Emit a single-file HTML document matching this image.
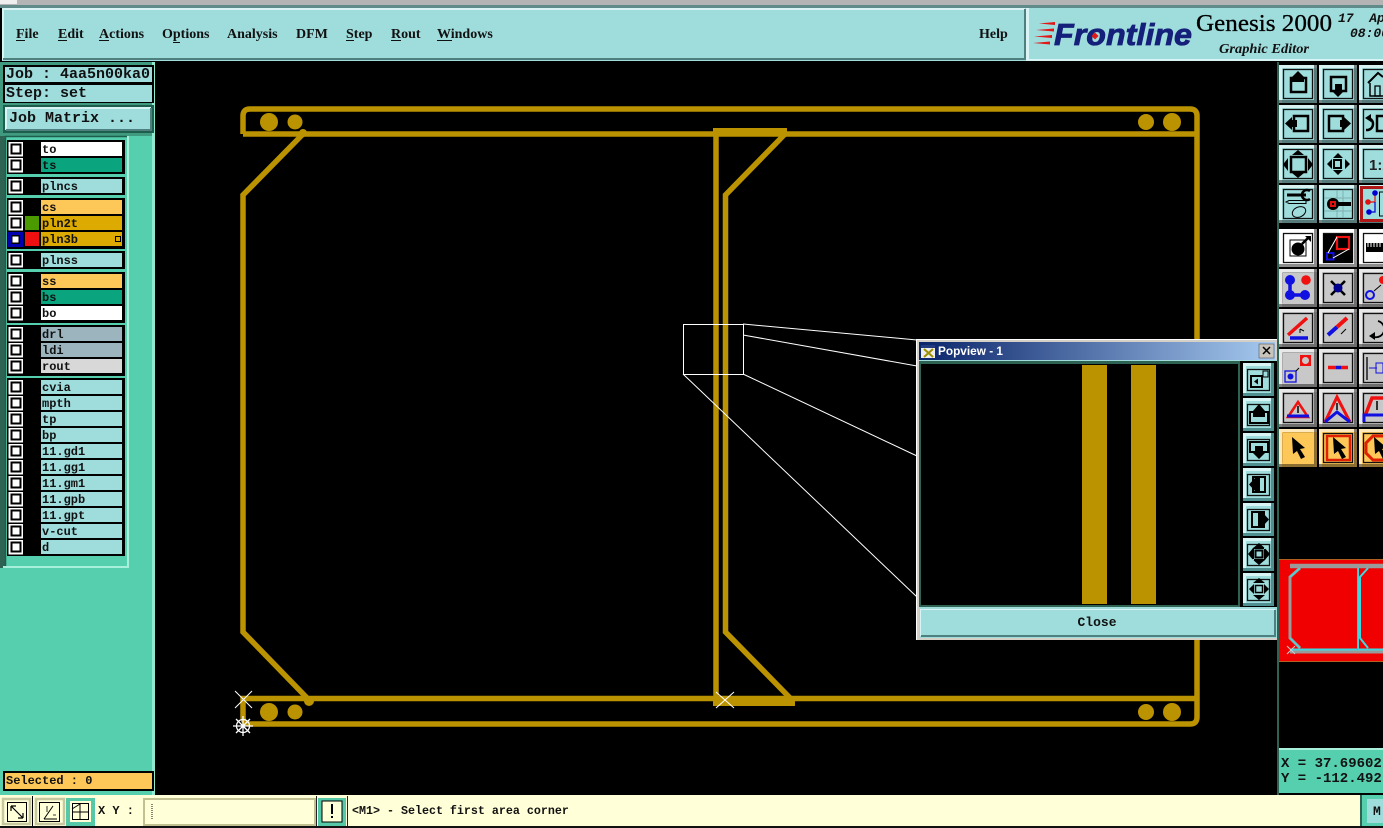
<!DOCTYPE html>
<html><head><meta charset="utf-8"><style>
html,body{margin:0;padding:0;background:#000;overflow:hidden}
svg{display:block}
text{white-space:pre}
.m{font-family:"Liberation Serif",serif;font-weight:bold;font-size:14px;fill:#111}
.l{font-family:"Liberation Mono",monospace;font-weight:bold;font-size:12px;fill:#111}
.j{font-family:"Liberation Mono",monospace;font-weight:bold;font-size:15px;fill:#111}
</style></head><body>
<svg width="1383" height="828" viewBox="0 0 1383 828" xmlns="http://www.w3.org/2000/svg">
<defs>
<linearGradient id="tg" x1="0" x2="1" y1="0" y2="0"><stop offset="0" stop-color="#0a246a"/><stop offset="1" stop-color="#a6caf0"/></linearGradient>
<g id="b"><rect width="38" height="38" fill="currentColor"/><path d="M1.500 38V1.500H38" fill="none" stroke="#fff" stroke-opacity=".6" stroke-width="3"/><path d="M36.500 0V36.500H0" fill="none" stroke="#000" stroke-opacity=".45" stroke-width="3"/><rect x="4.500" y="4.500" width="29" height="29" fill="none" stroke="#111" stroke-width="1.300"/></g>
<g id="s"><rect width="31" height="33" fill="#9fdcdc"/><path d="M1.500 33V1.500H31" fill="none" stroke="#d8f4f4" stroke-width="3"/><path d="M29.500 0V31.500H0" fill="none" stroke="#4f8f8f" stroke-width="3"/><rect x="4.500" y="6.500" width="22" height="21" fill="none" stroke="#111" stroke-width="1.300"/></g>
<g id="cb"><rect x="8.500" y="0" width="14.500" height="14.500" fill="#fff"/><rect x="11.500" y="2.500" width="9" height="9" fill="#fff" stroke="#000" stroke-width="2"/></g>
<g id="cur"><path d="M-6-11L-5 6-1 3 3 11 7 9 2 1 7 0Z" fill="#000"/></g>
</defs>

<!-- window title strip -->
<rect width="1383" height="828" fill="#000"/>
<rect width="1383" height="6" fill="#b4b4b4"/>
<rect x="0" y="0" width="17" height="4" fill="#eee"/>
<rect y="5" width="1383" height="3" fill="#5f8b8b"/>

<!-- menu bar -->
<rect x="2" y="8" width="1024" height="53" fill="#9fdcdc"/>
<path d="M3 60V9H1025" fill="none" stroke="#d8f4f4" stroke-width="2"/>
<path d="M1025 9V59H3" fill="none" stroke="#4f8080" stroke-width="2"/>
<rect x="1026" y="8" width="3" height="53" fill="#d8f4f4"/>
<rect x="1029" y="8" width="354" height="53" fill="#9fdcdc"/>
<rect x="1029" y="59" width="354" height="2" fill="#d8f4f4"/>
<text class="m" x="16" y="38">File</text><rect x="16" y="40" width="9" height="1" fill="#111"/>
<text class="m" x="58" y="38">Edit</text><rect x="58" y="40" width="9" height="1" fill="#111"/>
<text class="m" x="99" y="38">Actions</text><rect x="99" y="40" width="10" height="1" fill="#111"/>
<text class="m" x="162" y="38">Options</text><rect x="173" y="42" width="7" height="1" fill="#111"/>
<text class="m" x="227" y="38">Analysis</text>
<text class="m" x="296" y="38">DFM</text>
<text class="m" x="346" y="38">Step</text><rect x="346" y="40" width="8" height="1" fill="#111"/>
<text class="m" x="391" y="38">Rout</text><rect x="391" y="40" width="10" height="1" fill="#111"/>
<text class="m" x="437" y="38">Windows</text><rect x="437" y="40" width="15" height="1" fill="#111"/>
<text class="m" x="979" y="38">Help</text>

<!-- logo -->
<g fill="#e01818"><path d="M1039 23.500L1055 22V25Z"/><path d="M1036 30L1054 28.500V31.500Z"/><path d="M1034 36.500L1052 35V38Z"/><path d="M1033 43L1050 41.500V44.500Z"/></g>
<text x="1054" y="45" font-family="Liberation Sans,sans-serif" font-weight="bold" font-style="italic" font-size="31" fill="#15207a" stroke="#15207a" stroke-width=".8" textLength="138" lengthAdjust="spacingAndGlyphs">Frontline</text>
<rect x="1092.500" y="33.500" width="5" height="5" fill="#e01818" transform="rotate(45 1095 36)"/>
<text x="1196" y="31" font-family="Liberation Serif,serif" font-size="24" fill="#000" stroke="#000" stroke-width=".3" textLength="136" lengthAdjust="spacingAndGlyphs">Genesis 2000</text>
<text x="1219" y="53" font-family="Liberation Serif,serif" font-weight="bold" font-style="italic" font-size="14" fill="#111" textLength="90" lengthAdjust="spacingAndGlyphs">Graphic Editor</text>
<text x="1338" y="22" font-family="Liberation Mono,monospace" font-weight="bold" font-style="italic" font-size="13" fill="#111">17  Apr</text>
<text x="1350" y="37" font-family="Liberation Mono,monospace" font-weight="bold" font-style="italic" font-size="13" fill="#111">08:00</text>

<!-- left panel -->
<rect x="0" y="62" width="155" height="733" fill="#55cfae"/>
<rect x="0" y="62" width="155" height="74" fill="#3f9a80"/>
<rect x="152" y="62" width="3" height="733" fill="#8fe8d0"/>
<rect x="3" y="65" width="151" height="19" fill="#000"/>
<rect x="5" y="67" width="147" height="15" fill="#9fdcdc"/>
<text class="j" x="6" y="78">Job : 4aa5n00ka0</text>
<rect x="3" y="84" width="151" height="19" fill="#000"/>
<rect x="5" y="85" width="147" height="17" fill="#9fdcdc"/>
<text class="j" x="6" y="97">Step: set</text>
<rect x="3" y="105" width="151" height="28" fill="#1d5e4c"/>
<rect x="6" y="108" width="145" height="22" fill="#9fdcdc"/>
<path d="M6 130V108H151" fill="none" stroke="#d8f4f4" stroke-width="2"/>
<path d="M151 108V130H6" fill="none" stroke="#4f8080" stroke-width="2"/>
<text class="j" x="9" y="122">Job Matrix ...</text>

<rect x="0" y="136" width="5" height="432" fill="#2e6252"/>
<rect x="5" y="136" width="122" height="430" fill="#55cfae"/>
<path d="M5.500 566V136.500H127" fill="none" stroke="#1d5e4c" stroke-width="1.500"/>
<path d="M128 136V567H3" fill="none" stroke="#a8f0dc" stroke-width="2"/>

<!-- layer groups -->
<g fill="#000">
<rect x="7" y="140" width="118" height="34"/>
<rect x="7" y="177" width="118" height="18"/>
<rect x="7" y="198" width="118" height="51"/>
<rect x="7" y="251" width="118" height="18"/>
<rect x="7" y="272" width="118" height="51"/>
<rect x="7" y="325" width="118" height="51"/>
<rect x="7" y="378" width="118" height="178"/>
</g>
<g>
<use href="#cb" y="142"/><use href="#cb" y="158"/><use href="#cb" y="179"/><use href="#cb" y="200"/><use href="#cb" y="216"/>
<use href="#cb" y="232"/><use href="#cb" y="253"/><use href="#cb" y="274"/><use href="#cb" y="290"/><use href="#cb" y="306"/>
<use href="#cb" y="327"/><use href="#cb" y="343"/><use href="#cb" y="359"/>
<use href="#cb" y="380"/><use href="#cb" y="396"/><use href="#cb" y="412"/><use href="#cb" y="428"/><use href="#cb" y="444"/>
<use href="#cb" y="460"/><use href="#cb" y="476"/><use href="#cb" y="492"/><use href="#cb" y="508"/><use href="#cb" y="524"/><use href="#cb" y="540"/>
</g>
<rect x="8" y="232" width="15" height="15" fill="#0000b0"/><rect x="11" y="235" width="9" height="9" fill="#000"/><rect x="12.500" y="236.500" width="6" height="6" fill="#fff"/>
<rect x="25" y="216" width="14" height="14" fill="#4a9a00"/><rect x="25" y="232" width="14" height="14" fill="#f01010"/>
<g>
<rect x="41" y="142" width="81" height="14" fill="#fff"/>
<rect x="41" y="158" width="81" height="14" fill="#0aa57f"/>
<rect x="41" y="179" width="81" height="14" fill="#9fdcdc"/>
<rect x="41" y="200" width="81" height="14" fill="#fdc858"/>
<rect x="41" y="216" width="81" height="14" fill="#dcaa00"/>
<rect x="41" y="232" width="81" height="14" fill="#dcaa00"/>
<rect x="41" y="253" width="81" height="14" fill="#9fdcdc"/>
<rect x="41" y="274" width="81" height="14" fill="#fdc858"/>
<rect x="41" y="290" width="81" height="14" fill="#0aa57f"/>
<rect x="41" y="306" width="81" height="14" fill="#fff"/>
<rect x="41" y="327" width="81" height="14" fill="#9cb4be"/>
<rect x="41" y="343" width="81" height="14" fill="#9cb4be"/>
<rect x="41" y="359" width="81" height="14" fill="#d8d8d8"/>
<rect x="41" y="380" width="81" height="14" fill="#9fdcdc"/>
<rect x="41" y="396" width="81" height="14" fill="#9fdcdc"/>
<rect x="41" y="412" width="81" height="14" fill="#9fdcdc"/>
<rect x="41" y="428" width="81" height="14" fill="#9fdcdc"/>
<rect x="41" y="444" width="81" height="14" fill="#9fdcdc"/>
<rect x="41" y="460" width="81" height="14" fill="#9fdcdc"/>
<rect x="41" y="476" width="81" height="14" fill="#9fdcdc"/>
<rect x="41" y="492" width="81" height="14" fill="#9fdcdc"/>
<rect x="41" y="508" width="81" height="14" fill="#9fdcdc"/>
<rect x="41" y="524" width="81" height="14" fill="#9fdcdc"/>
<rect x="41" y="540" width="81" height="14" fill="#9fdcdc"/>
</g>
<rect x="115.500" y="236.500" width="5" height="5" fill="none" stroke="#000" stroke-width="1"/>
<text class="l" x="42" y="153">to</text><text class="l" x="42" y="169">ts</text><text class="l" x="42" y="190">plncs</text>
<text class="l" x="42" y="211">cs</text><text class="l" x="42" y="227">pln2t</text><text class="l" x="42" y="243">pln3b</text>
<text class="l" x="42" y="264">plnss</text><text class="l" x="42" y="285">ss</text><text class="l" x="42" y="301">bs</text><text class="l" x="42" y="317">bo</text>
<text class="l" x="42" y="338">drl</text><text class="l" x="42" y="354">ldi</text><text class="l" x="42" y="370">rout</text>
<text class="l" x="42" y="391">cvia</text><text class="l" x="42" y="407">mpth</text><text class="l" x="42" y="423">tp</text><text class="l" x="42" y="439">bp</text>
<text class="l" x="42" y="455">11.gd1</text><text class="l" x="42" y="471">11.gg1</text><text class="l" x="42" y="487">11.gm1</text><text class="l" x="42" y="503">11.gpb</text><text class="l" x="42" y="519">11.gpt</text>
<text class="l" x="42" y="535">v-cut</text><text class="l" x="42" y="551">d</text>

<rect x="3" y="771" width="151" height="20" fill="#000"/>
<rect x="5" y="773" width="147" height="16" fill="#fdc858"/>
<text class="l" x="6" y="784">Selected : 0</text>

<!-- PCB canvas -->
<g fill="none" stroke="#bb9300" stroke-width="5.500">
<path d="M243 134V116Q243 109 250 109H1190Q1197 109 1197 116V717Q1197 724 1190 724H250Q243 724 243 717V698.500H1197"/>
<path d="M243 134H1197"/>
<path d="M303 134L243 195V632L309 700"/>
<path d="M716 130V702"/>
<path d="M785 134L725.500 195V632L793 701"/>
</g>
<rect x="713" y="128" width="74" height="8" fill="#bb9300"/>
<rect x="713" y="699" width="82" height="7" fill="#bb9300"/>
<g fill="#bb9300">
<circle cx="269" cy="122" r="9"/><circle cx="295" cy="122" r="7.500"/><circle cx="1146" cy="122" r="8"/><circle cx="1172" cy="122" r="9"/>
<circle cx="269" cy="712" r="9"/><circle cx="295" cy="712" r="7.500"/><circle cx="1146" cy="712" r="8"/><circle cx="1172" cy="712" r="9"/>
<circle cx="309" cy="701" r="5"/><circle cx="303" cy="133" r="4"/>
</g>
<g fill="none" stroke="#fff" stroke-width="1">
<rect x="683.500" y="324.500" width="60" height="50"/>
<path d="M743 324L917 340M743 335L917 366M743 374L917 456M683 374L917 597"/>
<path d="M235 691L252 708M252 691L235 708M716 692L734 708M734 692L716 708"/>
<path d="M233 726H253M243 716V736M236 719L250 733M250 719L236 733" stroke-width="1.300"/><circle cx="243" cy="726" r="6.500" stroke-width="1.300"/>
</g>

<!-- popup -->
<rect x="916" y="339" width="361" height="301" fill="#d4d0c8"/>
<path d="M916.500 640V339.500H1277" fill="none" stroke="#fff"/>
<rect x="919" y="342" width="356" height="18" fill="url(#tg)"/>
<rect x="921" y="345" width="14" height="13" fill="#eee"/><rect x="921" y="345" width="14" height="3" fill="#223a80"/>
<path d="M924 349L933 357M933 349L924 357" stroke="#a09000" stroke-width="2"/>
<text x="938" y="355" font-family="Liberation Sans,sans-serif" font-weight="bold" font-size="12" fill="#fff" textLength="65" lengthAdjust="spacingAndGlyphs">Popview - 1</text>
<rect x="1259" y="344" width="15" height="14" fill="#c8c4bc" stroke="#555" stroke-width=".6"/>
<path d="M1263 347L1270 354M1270 347L1263 354" stroke="#000" stroke-width="1.500"/>
<rect x="919" y="360" width="358" height="278" fill="#9fdcdc"/>
<rect x="919" y="361" width="321" height="246" fill="#2e6252"/>
<rect x="921" y="364" width="317" height="241" fill="#000"/>
<rect x="1082" y="365" width="25" height="239" fill="#bb9300"/>
<rect x="1131" y="365" width="25" height="239" fill="#bb9300"/>
<rect x="1240" y="361" width="37" height="246" fill="#000"/>
<use href="#s" x="1243" y="363"/><use href="#s" x="1243" y="398"/><use href="#s" x="1243" y="433"/><use href="#s" x="1243" y="468"/><use href="#s" x="1243" y="503"/><use href="#s" x="1243" y="538"/><use href="#s" x="1243" y="573"/>
<g fill="none" stroke="#000" stroke-width="2">
<path d="M1251 376H1262V387H1251Z"/><path d="M1263 371H1268V377H1263Z" stroke-width="1"/>
<path d="M1250 412H1268V423H1250Z"/>
<path d="M1250 442H1268V452H1250Z"/>
<path d="M1265 477H1253V492H1265Z"/>
<path d="M1252 512H1264V527H1252Z"/>
<rect x="1255.500" y="550.500" width="7" height="7" stroke-width="2"/>
<rect x="1255.500" y="585.500" width="7" height="7" stroke-width="1.500"/>
</g>
<g fill="#000">
<path d="M1254 381.500L1258 378.500V384.500Z"/>
<path d="M1259 404L1265 411V417H1253V411Z"/>
<path d="M1259 459L1266 452H1263V446H1255V452H1252Z"/>
<path d="M1249 484.500L1255 478H1260V491H1255Z"/>
<path d="M1269 519.500L1263 513H1258V526H1263Z"/>
<path d="M1259 543L1266 549H1252ZM1259 565L1266 559H1252ZM1248 554L1254 547V561ZM1270 554L1264 547V561Z"/>
<path d="M1259 578L1265 583H1253ZM1259 600L1265 595H1253ZM1249 589L1254 584V594ZM1269 589L1264 584V594Z"/>
</g>
<rect x="920" y="609" width="355" height="27" fill="#9fdcdc"/>
<path d="M920.500 636V609.500H1275" fill="none" stroke="#d8f4f4"/>
<path d="M1275 610V636H921" fill="none" stroke="#4f8080" stroke-width="2"/>
<text x="1097" y="626" text-anchor="middle" font-family="Liberation Mono,monospace" font-weight="bold" font-size="13" fill="#111">Close</text>

<!-- right toolbar -->
<rect x="1277" y="62" width="2" height="733" fill="#2e6252"/>
<rect x="1279" y="62" width="104" height="408" fill="#000"/>
<g color="#9fdcdc">
<use href="#b" x="1279" y="65"/><use href="#b" x="1319" y="65"/><use href="#b" x="1359" y="65"/>
<use href="#b" x="1279" y="105"/><use href="#b" x="1319" y="105"/><use href="#b" x="1359" y="105"/>
<use href="#b" x="1279" y="145"/><use href="#b" x="1319" y="145"/><use href="#b" x="1359" y="145"/>
<use href="#b" x="1279" y="185"/><use href="#b" x="1319" y="185"/><use href="#b" x="1359" y="185"/>
</g>
<g color="#fff"><use href="#b" x="1279" y="229"/><use href="#b" x="1319" y="229"/><use href="#b" x="1359" y="229"/></g>
<g color="#c8c8c8">
<use href="#b" x="1279" y="269"/><use href="#b" x="1319" y="269"/><use href="#b" x="1359" y="269"/>
<use href="#b" x="1279" y="309"/><use href="#b" x="1319" y="309"/><use href="#b" x="1359" y="309"/>
<use href="#b" x="1279" y="349"/><use href="#b" x="1319" y="349"/><use href="#b" x="1359" y="349"/>
<use href="#b" x="1279" y="389"/><use href="#b" x="1319" y="389"/><use href="#b" x="1359" y="389"/>
</g>
<g color="#fdc858"><use href="#b" x="1279" y="429"/><use href="#b" x="1319" y="429"/><use href="#b" x="1359" y="429"/></g>
<!-- frameless buttons -->
<rect x="1283" y="273" width="31" height="31" fill="#c8c8c8"/>
<rect x="1283" y="353" width="31" height="31" fill="#c8c8c8"/>
<rect x="1283" y="433" width="31" height="31" fill="#fdc858"/>

<!-- teal icons -->
<g fill="none" stroke="#000" stroke-width="2.500">
<rect x="1291" y="78" width="15" height="14"/><path d="M1331 77H1346V91H1331Z"/>
<path d="M1368 83L1378 73 1383 77" stroke-width="2"/><path d="M1370 83V96H1383" stroke-width="1.500"/><path d="M1375 86H1380V96H1375Z" stroke-width="1.300"/>
<rect x="1294" y="116" width="14" height="15"/><rect x="1329" y="116" width="14" height="15"/>
<path d="M1383 116H1377V131H1383"/><path d="M1368 118A6 6 0 0 1 1373 124A6 6 0 0 1 1368 130H1366" stroke-width="2.500"/>
<rect x="1291" y="157" width="15" height="15"/><rect x="1334" y="160" width="7" height="8" stroke-width="2"/>
</g>
<g fill="#000">
<path d="M1298 71L1304 77V82H1292V77Z"/><path d="M1338 97L1331 90H1345Z"/><rect x="1335" y="84" width="7" height="7"/>
<path d="M1285 123.500L1292 117V130Z"/><rect x="1292" y="120" width="5" height="7"/>
<path d="M1351 123.500L1344 117V130Z"/><rect x="1340" y="120" width="5" height="7"/>
<path d="M1298 150L1304 155H1292ZM1298 178L1304 173H1292ZM1283 164.500L1288 158V171ZM1313 164.500L1308 158V171Z"/>
<path d="M1338 153L1343 158H1333ZM1338 175L1343 170H1333ZM1327 164L1332 159V169ZM1350 164L1345 159V169Z"/>
<path d="M1365 118L1371 114V122Z"/>
</g>
<text x="1369" y="170" font-family="Liberation Sans,sans-serif" font-weight="bold" font-size="15" fill="#222">1:2</text>
<!-- row 4 -->
<path d="M1287 195H1306" stroke="#000" stroke-width="3"/><path d="M1310 191A5 5 0 1 0 1310 199" fill="none" stroke="#000" stroke-width="2.500"/>
<path d="M1289 200.500H1306V203.500H1289L1286 202Z" fill="none" stroke="#000"/>
<ellipse cx="1299" cy="212" rx="7" ry="5" fill="none" stroke="#000" transform="rotate(-25 1299 212)"/>
<path d="M1324 198H1352M1337 190V218M1343 190V218M1324 211H1352" stroke="#7fb0b0"/>
<circle cx="1333" cy="204" r="6" fill="#000"/><rect x="1336" y="202" width="15" height="4" fill="#000"/><rect x="1330" y="201" width="6" height="6" fill="#e01010"/><rect x="1332" y="203" width="2" height="2" fill="#000"/>
<rect x="1360" y="186" width="23" height="36" fill="#b01818"/><rect x="1363" y="189" width="20" height="30" fill="#9fdcdc"/>
<path d="M1368 202H1375V193" fill="none" stroke="#e01010" stroke-width="1.200"/><path d="M1375 202V212H1369" fill="none" stroke="#0000d0" stroke-width="1.200"/>
<circle cx="1368" cy="202" r="2.800" fill="#e01010"/><circle cx="1375" cy="193" r="2.800" fill="#0000d0"/><circle cx="1369" cy="212" r="2.800" fill="#0000d0"/>
<rect x="1379.500" y="192" width="4" height="24" fill="none" stroke="#000"/>

<!-- white row -->
<rect x="1290" y="240" width="16" height="16" fill="none" stroke="#000"/>
<circle cx="1298" cy="249" r="6.500" fill="#000"/><path d="M1302 244L1308 238" stroke="#000" stroke-width="2.500"/><path d="M1305 236H1311V242Z" fill="#000"/>
<rect x="1323" y="234" width="30" height="29" fill="#000"/>
<rect x="1337" y="237" width="12" height="12" fill="none" stroke="#f01010" stroke-width="2.200"/>
<rect x="1327" y="253" width="6.500" height="6.500" fill="none" stroke="#1010e0" stroke-width="2"/>
<path d="M1328 253L1337 237M1333 258L1349 249" stroke="#fff"/>
<rect x="1366" y="243" width="17" height="9" fill="#000"/><path d="M1368 243V247M1371 243V247M1374 243V247M1377 243V247M1380 243V247" stroke="#fff"/>
<!-- gray row 2 -->
<path d="M1290 283V295H1305" fill="none" stroke="#1010e0" stroke-width="3.500"/>
<circle cx="1290" cy="280" r="5" fill="#1010e0"/><circle cx="1306" cy="280" r="4.800" fill="#f01010"/><circle cx="1290" cy="295" r="5" fill="#1010e0"/><circle cx="1305" cy="295" r="5" fill="#1010e0"/>
<path d="M1331 281L1345 295M1345 281L1331 295" stroke="#000" stroke-width="2.500"/><circle cx="1338" cy="288" r="4.500" fill="#000090"/>
<circle cx="1370" cy="295" r="4" fill="none" stroke="#1010e0" stroke-width="2"/><path d="M1374 291L1381 285" stroke="#000"/><circle cx="1383" cy="280" r="4" fill="#f01010"/>
<!-- gray row 3 -->
<path d="M1288 335L1307 318" stroke="#f01010" stroke-width="3.500"/><path d="M1290 338H1308" stroke="#1010e0" stroke-width="3.500"/><path d="M1304 331L1300 329M1300 329V333" stroke="#000"/>
<path d="M1328 335L1337 327" stroke="#1010e0" stroke-width="4"/><path d="M1337 327L1347 318" stroke="#f01010" stroke-width="4"/><path d="M1341 334L1346 329" stroke="#000"/>
<path d="M1378 321A8 8 0 1 1 1374 337" fill="none" stroke="#000" stroke-width="1.800"/><path d="M1369 336L1375 332V340Z" fill="#000"/>
<!-- gray row 4 -->
<rect x="1300" y="355" width="11" height="11" fill="#f01010"/><circle cx="1305.500" cy="360.500" r="3.500" fill="#c8c8c8"/>
<rect x="1285" y="371" width="11" height="11" fill="none" stroke="#1010e0" stroke-width="1.300"/><circle cx="1290.500" cy="376.500" r="3" fill="#1010e0"/><path d="M1296 371L1299 368" stroke="#000"/>
<path d="M1328 367.500H1336" stroke="#f01010" stroke-width="3.500"/><path d="M1336 367.500H1341" stroke="#1010e0" stroke-width="3.500"/><path d="M1341 367.500H1348" stroke="#f01010" stroke-width="3.500"/>
<path d="M1367 357V380" stroke="#000" stroke-width="1.300"/><path d="M1369 368H1377" stroke="#1010e0"/><rect x="1376" y="363" width="7" height="10" fill="none" stroke="#1010e0"/>
<!-- gray row 5 -->
<path d="M1288 417L1298 402 1308 417Z" fill="none" stroke="#f01010" stroke-width="2.500"/><path d="M1287 416H1309" stroke="#1010e0" stroke-width="3"/>
<path d="M1325 422L1337 397 1350 422" fill="none" stroke="#f01010" stroke-width="3"/><path d="M1325 422L1337 412 1350 422" fill="none" stroke="#1010e0" stroke-width="3"/>
<path d="M1365 416L1372 398H1383" fill="none" stroke="#f01010" stroke-width="3.500"/><path d="M1364 422V415H1383" fill="none" stroke="#1010e0" stroke-width="3"/>
<path d="M1298 406V413M1337 403V410M1377 401V410" stroke="#000" stroke-width="1.500"/>
<!-- orange row -->
<use href="#cur" transform="translate(1298 448)"/>
<rect x="1327" y="436" width="23" height="24" fill="none" stroke="#e02000" stroke-width="2.500"/>
<use href="#cur" transform="translate(1339 448)"/>
<path d="M1383 436H1373L1366 443V453L1373 460H1383" fill="none" stroke="#e02000" stroke-width="3"/>
<use href="#cur" transform="translate(1380 448)"/>

<!-- minimap -->
<rect x="1279" y="559" width="104" height="103" fill="#f00000"/>
<rect x="1279" y="559" width="104" height="1" fill="#b06020"/><rect x="1279" y="661" width="104" height="1" fill="#b06020"/>
<g fill="none">
<path d="M1290 566H1383" stroke="#9a9a9a" stroke-width="4.500"/>
<path d="M1290 652H1383" stroke="#9a9a9a" stroke-width="3"/>
<path d="M1290 649.500H1383" stroke="#40d8e0" stroke-width="2"/>
<path d="M1300 568L1290 577V638L1300 648" stroke="#9a9a9a" stroke-width="3"/>
<path d="M1300 568L1290 577" stroke="#40d8e0" stroke-width="1.500"/>
<path d="M1290 638L1300 648" stroke="#40d8e0" stroke-width="1.500"/>
<path d="M1358 568V650" stroke="#9a9a9a" stroke-width="2"/>
<path d="M1358.500 568V650" stroke="#40d8e0" stroke-width="1"/>
<path d="M1368 568L1360 577V638L1368 648" stroke="#40d8e0" stroke-width="2"/>
<path d="M1287 646L1295 654M1295 646L1287 654" stroke="#ccc" stroke-width="1"/>
</g>

<!-- coordinates -->
<rect x="1279" y="748" width="104" height="45" fill="#55cfae"/>
<rect x="1279" y="748" width="104" height="2" fill="#a8f0dc"/>
<text x="1281" y="767" font-family="Liberation Mono,monospace" font-weight="bold" font-size="14" fill="#111">X = 37.69602</text>
<text x="1281" y="782" font-family="Liberation Mono,monospace" font-weight="bold" font-size="14" fill="#111">Y = -112.492</text>

<!-- bottom bar -->
<rect y="795" width="1383" height="31" fill="#ffffd8"/>
<rect y="826" width="1383" height="2" fill="#111"/>
<g fill="#ffffd8" stroke="#c8c8a0" stroke-width="2.500">
<rect x="3" y="799" width="27" height="25"/><rect x="36" y="799" width="28" height="25"/>
</g>
<path d="M32.500 796V826" stroke="#000"/>
<rect x="66" y="798" width="29" height="28" fill="#55c8a8"/>
<rect x="70" y="801" width="21" height="21" fill="#ffffd8"/>
<g fill="none" stroke="#000">
<rect x="7.500" y="802.500" width="19" height="19"/><path d="M11 806L23 818M11 806H16M11 806V811M23 818H18M23 818V813" stroke-width="1.200"/>
<rect x="39.500" y="802.500" width="20" height="19"/><path d="M44 819H57M44 819L53 806"/><path d="M47 806V812M53 815H56" stroke-width=".8"/>
<rect x="72.500" y="803.500" width="16" height="16"/><path d="M72 812H88M80 804V820M72 809L80 804"/>
</g>
<text class="l" x="98" y="814">X Y :</text>
<rect x="144" y="799" width="171" height="26" fill="#ffffd8" stroke="#c0c090" stroke-width="2"/>
<path d="M152 804V820" stroke="#111" stroke-dasharray="1 1"/>
<rect x="316" y="796" width="1" height="30" fill="#222"/>
<rect x="318" y="798" width="28" height="28" fill="#55c8a8"/>
<rect x="322" y="801" width="20" height="21" fill="#ffffd8" stroke="#000"/>
<rect x="331" y="804" width="2" height="10" fill="#000"/><rect x="331" y="816" width="2" height="2" fill="#000"/>
<rect x="347" y="796" width="1" height="30" fill="#222"/>
<text x="352" y="814" font-family="Liberation Mono,monospace" font-weight="bold" font-size="11.670" fill="#111">&lt;M1&gt; - Select first area corner</text>
<rect x="1360" y="795" width="23" height="31" fill="#55cfae"/>
<rect x="1360" y="795" width="2" height="31" fill="#2e6252"/>
<rect x="1367" y="799" width="16" height="24" fill="#9fdcdc"/>
<text x="1373" y="815" font-family="Liberation Mono,monospace" font-weight="bold" font-size="13" fill="#111">M</text>
</svg>
</body></html>
